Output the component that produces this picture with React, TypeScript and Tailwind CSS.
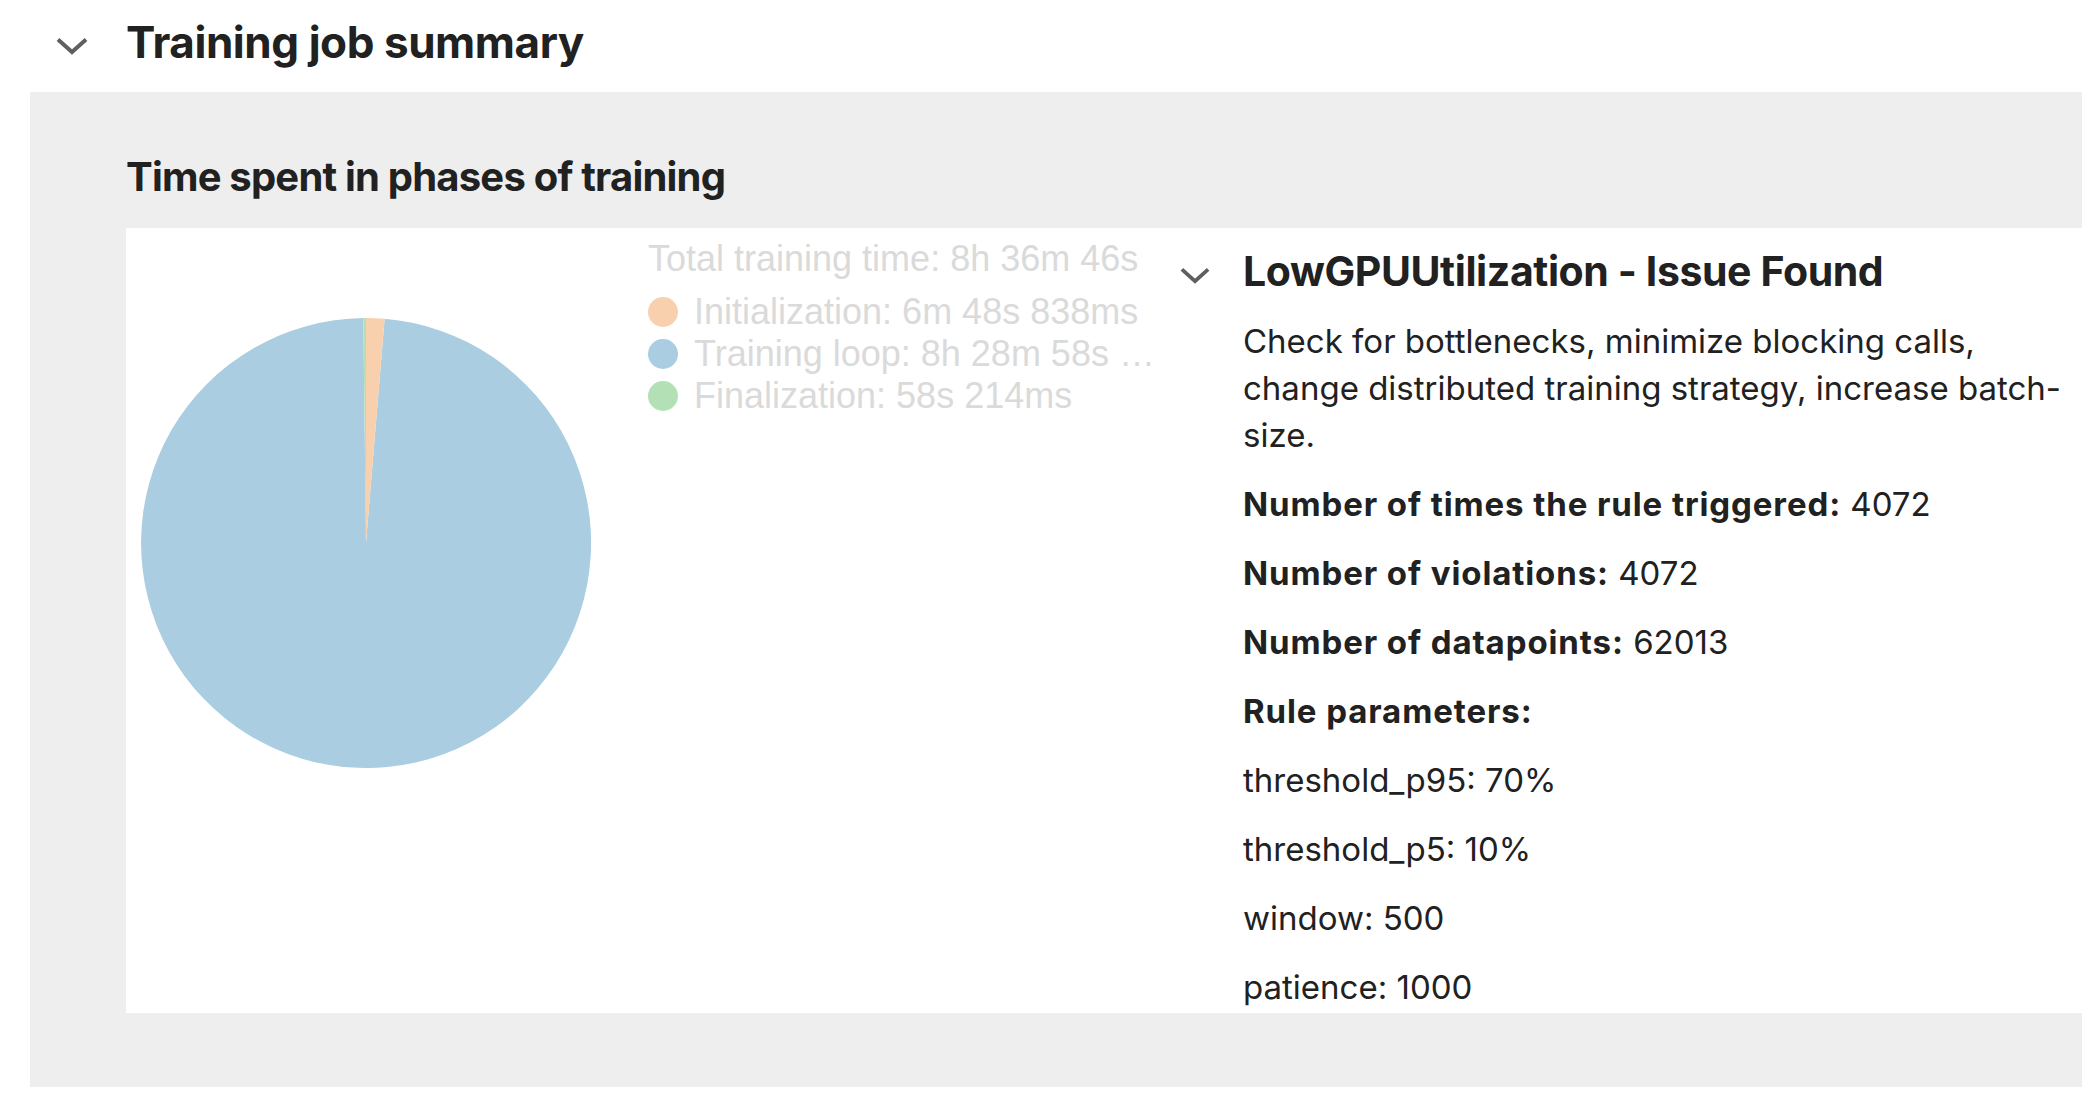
import React from "react";

const legend = [
  { label: "Initialization: 6m 48s 838ms", color: "bg-[#f8d0ae]" },
  { label: "Training loop: 8h 28m 58s …", color: "bg-[#abcde1]" },
  { label: "Finalization: 58s 214ms", color: "bg-[#b3e0b4]" },
];

const stats = [
  { label: "Number of times the rule triggered:", value: "4072" },
  { label: "Number of violations:", value: "4072" },
  { label: "Number of datapoints:", value: "62013" },
];

const params = ["threshold_p95: 70%", "threshold_p5: 10%", "window: 500", "patience: 1000"];

function Chevron({ className }: { className?: string }) {
  return (
    <svg viewBox="0 0 32 18" className={className} fill="none">
      <polyline points="2,2.5 16,15 30,2.5" stroke="#5f5f5f" strokeWidth="4" strokeLinecap="butt" strokeLinejoin="miter" />
    </svg>
  );
}

function Pie() {
  return (
    <svg viewBox="0 0 450 450" className="h-[450px] w-[450px] shrink-0">
      <path d="M225,225 L243.63,0.77 A225,225 0 1 1 222.33,0.02 Z" fill="#abcde1" />
      <path d="M225,225 L225,0 A225,225 0 0 1 243.63,0.77 Z" fill="#f8d0ae" />
      <path d="M225,225 L222.33,0.02 A225,225 0 0 1 225,0 Z" fill="#b3e0b4" />
    </svg>
  );
}

export default function App() {
  return (
    <div className="min-h-screen w-[2082px] overflow-hidden bg-white font-['Inter','Noto_Sans',sans-serif] text-[#212121]">
      <header className="flex h-[92px] items-start pt-[16px]">
        <Chevron className="ml-[56px] mt-[21px] h-[18px] w-[32px]" />
        <h1 className="ml-[38px] text-[44px] font-bold leading-[53px] tracking-[-0.01em]">Training job summary</h1>
      </header>

      <section className="ml-[30px] bg-[#eeeeee] pb-[74px] pl-[96px] pt-[61px]">
        <h2 className="text-[40px] font-bold leading-[48px] tracking-[-0.02em]">Time spent in phases of training</h2>

        <div className="mt-[27px] flex h-[785px] overflow-hidden bg-white">
          <div className="flex w-[1054px] shrink-0 items-start">
            <div className="ml-[15px] mt-[90px]">
              <Pie />
            </div>
            <div className="ml-[57px] mt-[10px] w-[520px] whitespace-nowrap font-['Liberation_Sans',Arial,sans-serif] text-[36px] leading-[42px] text-[#dadada]">
              <p>Total training time: 8h 36m 46s</p>
              <ul className="mt-[11px]">
                {legend.map((item) => (
                  <li key={item.label} className="flex items-center">
                    <span className={`h-[30px] w-[30px] shrink-0 rounded-full ${item.color}`} />
                    <span className="ml-[16px]">{item.label}</span>
                  </li>
                ))}
              </ul>
            </div>
          </div>

          <div className="flex flex-1">
            <div className="w-[63px] shrink-0 pt-[39px]">
              <Chevron className="h-[17px] w-[30px]" />
            </div>
            <div className="w-[850px] shrink-0 pt-[19px] text-[33px]">
              <h3 className="text-[41px] font-bold leading-[48px] tracking-[-0.01em]">LowGPUUtilization - Issue Found</h3>
              <p className="mt-[23px] leading-[47px]">
                Check for bottlenecks, minimize blocking calls, change distributed training strategy, increase batch-size.
              </p>
              <div className="mt-[11px] leading-[69px]">
                {stats.map((s) => (
                  <p key={s.label}>
                    <span className="font-bold tracking-[0.9px]">{s.label}</span> {s.value}
                  </p>
                ))}
                <p className="font-bold tracking-[0.9px]">Rule parameters:</p>
                {params.map((p) => (
                  <p key={p}>{p}</p>
                ))}
              </div>
            </div>
          </div>
        </div>
      </section>
    </div>
  );
}
